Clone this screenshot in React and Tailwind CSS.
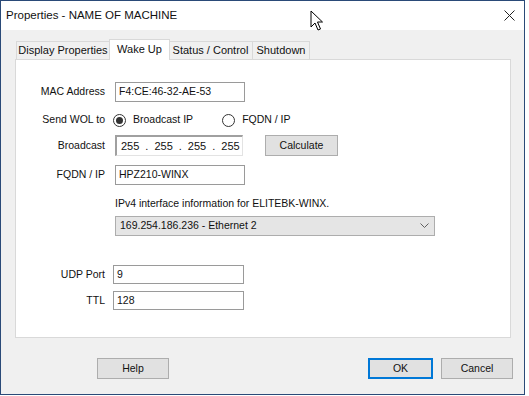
import React from 'react';

const font = { fontFamily: '"Liberation Sans", Arial, sans-serif' };

const Field = ({ value, className = '' }) => (
    <div className={`h-full border border-[#9a9a9a] bg-white flex items-center px-[3px] ${className}`}>
        {value}
    </div>
);

const Radio = ({ checked, label }) => (
    <div className="flex items-center gap-[7px]">
        <span className="w-[13px] h-[13px] rounded-full border border-[#333] bg-white flex items-center justify-center">
            {checked && <span className="w-[7px] h-[7px] rounded-full bg-[#333]" />}
        </span>
        <span>{label}</span>
    </div>
);

const Button = ({ children, primary, className = '' }) => (
    <button
        className={`h-[21px] bg-[#e1e1e1] flex items-center justify-center ${primary ? 'border-2 border-[#0078d7]' : 'border border-[#adadad]'} ${className}`}
    >
        {children}
    </button>
);

const Row = ({ label, className = '', children }) => (
    <div className={`flex items-center ${className}`}>
        <div className="w-[89px] text-right shrink-0">{label}</div>
        <div className="ml-[10px] flex items-center h-full">{children}</div>
    </div>
);

export default function App() {
    return (
        <div className="w-[529px] h-[396px] bg-white text-[10.5px] text-[#111]" style={font}>
            <div className="relative w-[525px] h-[395px] border border-[#2a4a78] bg-[#f0f0f0] flex flex-col">
                {/* Title bar */}
                <div className="h-[29px] bg-white flex items-center justify-between pl-[5px] pr-[9px] text-[11.5px]">
                    <span>Properties - NAME OF MACHINE</span>
                    <svg width="11" height="11" viewBox="0 0 11 11" className="text-[#222]">
                        <path d="M0.5 0.5 L10.5 10.5 M10.5 0.5 L0.5 10.5" stroke="currentColor" strokeWidth="1" />
                    </svg>
                </div>

                {/* Mouse cursor */}
                <svg className="absolute left-[309px] top-[9px]" width="14" height="21" viewBox="0 0 14 21">
                    <path d="M1 1 L1 17 L5 13 L8 20 L10.5 19 L7.5 12 L12.5 12 Z" fill="#fff" stroke="#000" strokeWidth="1" strokeLinejoin="round" />
                </svg>

                {/* Tabs */}
                <div className="ml-[15px] mt-[9px] h-[21px] flex items-end relative z-10 text-[11px]">
                    <div className="w-[94px] h-[18px] border border-b-0 border-[#d9d9d9] flex items-center justify-center mb-px">Display Properties</div>
                    <div className="w-[61px] h-[21px] border border-b-0 border-[#d9d9d9] bg-white flex items-center justify-center -mx-px pb-[1px]">Wake Up</div>
                    <div className="w-[84px] h-[18px] border border-b-0 border-l-0 border-[#d9d9d9] flex items-center justify-center mb-px">Status / Control</div>
                    <div className="w-[57px] h-[18px] border border-b-0 border-l-0 border-[#d9d9d9] flex items-center justify-center mb-px">Shutdown</div>
                </div>

                {/* Panel */}
                <div className="ml-[14px] w-[496px] h-[279px] -mt-px bg-white border border-[#d9d9d9] flex flex-col pt-[22px]">
                    <Row label="MAC Address" className="h-[20px]">
                        <Field value="F4:CE:46-32-AE-53" className="w-[130px]" />
                    </Row>
                    <Row label="Send WOL to" className="h-[16px] mt-[10px]">
                        <div className="flex items-center gap-[29px] -ml-[2px]">
                            <Radio checked label="Broadcast IP" />
                            <Radio label="FQDN / IP" />
                        </div>
                    </Row>
                    <Row label="Broadcast" className="h-[21px] mt-[7px]">
                        <div className="w-[128px] h-full border-t-2 border-l-2 border-t-[#a0a0a0] border-l-[#a0a0a0] border-r border-b border-r-[#e3e3e3] border-b-[#e3e3e3] bg-white flex items-center pl-[4px] text-[11px]">
                            <span>255</span>
                            <span className="mx-[6px]">.</span>
                            <span>255</span>
                            <span className="mx-[6px]">.</span>
                            <span>255</span>
                            <span className="mx-[6px]">.</span>
                            <span>255</span>
                        </div>
                        <Button className="w-[73px] ml-[22px]">Calculate</Button>
                    </Row>
                    <Row label="FQDN / IP" className="h-[20px] mt-[9px]">
                        <Field value="HPZ210-WINX" className="w-[130px]" />
                    </Row>
                    <div className="ml-[99px] mt-[11px] h-[16px] flex items-center">
                        IPv4 interface information for ELITEBK-WINX.
                    </div>
                    <div className="ml-[99px] mt-[4px] w-[320px] h-[20px] bg-[#e5e5e5] border border-[#adadad] flex items-center justify-between pl-[4px] pr-[5px]">
                        <span>169.254.186.236 - Ethernet 2</span>
                        <svg width="9" height="6" viewBox="0 0 9 6">
                            <path d="M0.5 0.5 L4.5 4.5 L8.5 0.5" fill="none" stroke="#606060" strokeWidth="1" />
                        </svg>
                    </div>
                    <Row label="UDP Port" className="h-[19px] mt-[29px]">
                        <Field value="9" className="w-[131px] -ml-[2px]" />
                    </Row>
                    <Row label="TTL" className="h-[19px] mt-[7px]">
                        <Field value="128" className="w-[131px] -ml-[2px]" />
                    </Row>
                </div>

                {/* Footer buttons */}
                <div className="mt-[20px] flex items-center">
                    <Button className="w-[72px] ml-[96px]">Help</Button>
                    <Button primary className="w-[65px] ml-[199px]">OK</Button>
                    <Button className="w-[72px] ml-[8px]">Cancel</Button>
                </div>
            </div>
        </div>
    );
}
